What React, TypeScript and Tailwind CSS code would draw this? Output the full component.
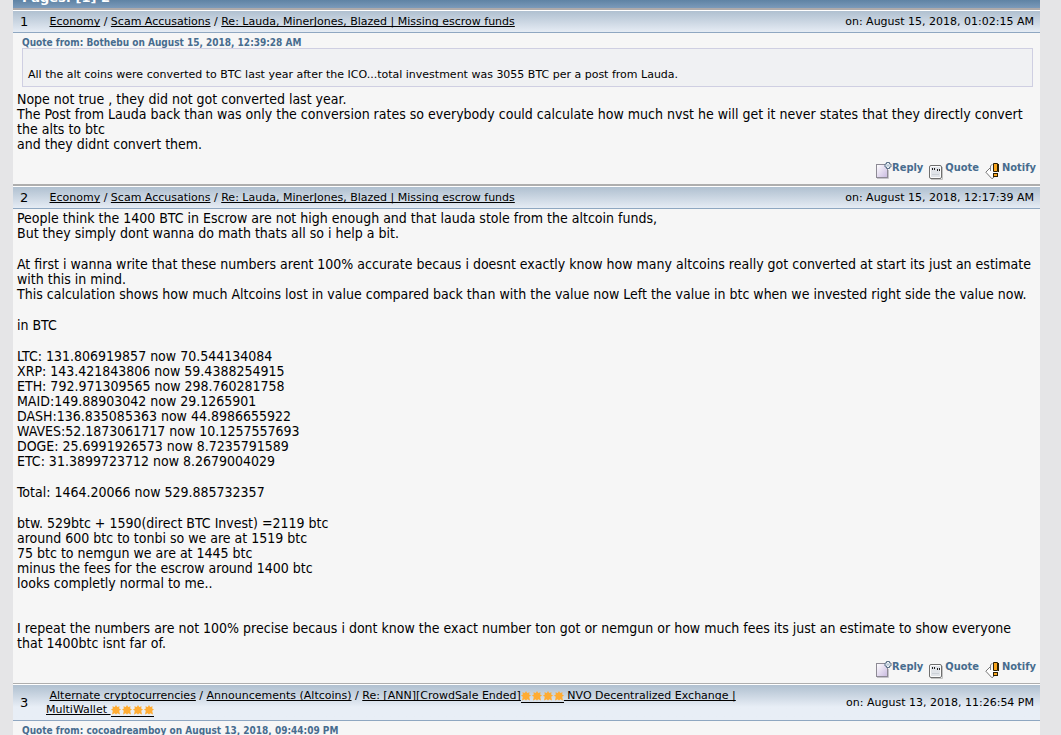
import { Fragment, ReactNode } from "react";

type Crumb = { label: ReactNode; href: string };

function Star() {
  return (
    <svg viewBox="0 0 10 10" className="h-[10px] w-[10px]" aria-hidden="true">
      <path
        d="M5 0 6.2 1.9 8.6 1.2 8.1 3.5 10 4.4 8.2 5.8 9 9.4 6.3 8.3 5 9.6 3.7 8.3 1 9.4 1.8 5.8 0 4.4 1.9 3.5 1.4 1.2 3.8 1.9Z"
        fill="#ffac33"
      />
    </svg>
  );
}

// the border carries the link underline on below the stars
function Stars() {
  return (
    <span className="inline-flex h-3 gap-px border-b border-black align-[-2px]">
      <Star />
      <Star />
      <Star />
      <Star />
    </span>
  );
}

function ReplyIcon() {
  return (
    <svg viewBox="0 0 16 18" className="h-[18px] w-4" aria-hidden="true">
      <defs>
        <linearGradient id="sheet" x1="0" y1="0" x2="1" y2="1">
          <stop offset="0" stopColor="#ffffff" />
          <stop offset="1" stopColor="#c9b9e0" />
        </linearGradient>
      </defs>
      <rect x="0.5" y="3.5" width="11" height="13" fill="url(#sheet)" stroke="#8d8a94" />
      <path d="M1 17.5h11.5V9" fill="none" stroke="#c5c3ca" />
      <path
        d="M10.5 1.5h3v1.5h1.5v3h-1.5v1.5h-3V6H9V3h1.5Z"
        fill="#eef3f8"
        stroke="#5b7188"
        strokeLinejoin="round"
      />
      <path d="M12 3v3M10.5 4.5h3" stroke="#b4c6d6" />
    </svg>
  );
}

function QuoteIcon() {
  return (
    <svg viewBox="0 0 14 15" className="h-[15px] w-[14px]" aria-hidden="true">
      <path d="M2 14.5h11.5V2" fill="none" stroke="#c4c4c4" />
      <rect x="0.5" y="0.5" width="12" height="13" rx="1.5" fill="#fcfcfc" stroke="#6f6f6f" />
      <rect x="2" y="2" width="9" height="10" fill="#e0e3e8" />
      <path d="M3.5 3v2M5.5 3v2M8.5 4v2M10.5 4v2" stroke="#222" />
      <path d="M3 9.5h7" stroke="#cbd0d6" />
    </svg>
  );
}

function NotifyIcon() {
  return (
    <svg viewBox="0 0 15 17" className="h-[17px] w-[15px]" aria-hidden="true">
      <path d="M5.5 4.5 0.8 9.2 7 15.8 13 10.5" fill="#fff" stroke="#777" />
      <path d="M7.5 1 5.5 3v5" fill="none" stroke="#888" />
      <path d="M8.5 0.5h4v8h-4Z" fill="#f9a51c" stroke="#2b2005" />
      <path d="M13.5 1v8" stroke="#2b2005" />
      <rect x="8.5" y="10.5" width="4" height="3" fill="#f9a51c" stroke="#2b2005" />
    </svg>
  );
}

function PostHeader({ num, crumbs, date }: { num: number; crumbs: Crumb[]; date: string }) {
  return (
    <header className="flex items-center border-b border-[#8fa7c1] bg-linear-to-b from-[#b0c0d0] to-[#e8eef6] to-[22px] pt-1 pr-[6px] pb-[3px] pl-[7px]">
      <span className="w-[26px] shrink-0 text-[13px] leading-[14px]">{num}</span>
      <div className="max-w-[700px] flex-1 text-[11px] leading-[14px]">
        &nbsp;
        {crumbs.map((c, i) => (
          <Fragment key={c.href}>
            {i > 0 && " / "}
            <a href={c.href} className="underline underline-offset-1 [text-decoration-skip-ink:none]">
              {c.label}
            </a>
          </Fragment>
        ))}
      </div>
      <span className="ml-auto text-[11px] leading-[14px] whitespace-nowrap">on: {date}</span>
    </header>
  );
}

function PostActions() {
  return (
    <div className="flex justify-end gap-[6px] pr-1 font-['DejaVu_Sans_Condensed','DejaVu_Sans',sans-serif] text-[11px] leading-[14px] font-bold text-[#476c8e]">
      <a href="#reply" className="flex items-start">
        <ReplyIcon />
        <span>Reply</span>
      </a>
      <a href="#quote" className="flex items-start gap-[2px]">
        <span className="pt-1">
          <QuoteIcon />
        </span>
        <span>Quote</span>
      </a>
      <a href="#notify" className="flex items-start gap-[2px]">
        <span className="pt-[2px]">
          <NotifyIcon />
        </span>
        <span>Notify</span>
      </a>
    </div>
  );
}

function QuoteTitle({ children }: { children: ReactNode }) {
  return (
    <div className="px-[5px] font-['DejaVu_Sans_Condensed','DejaVu_Sans',sans-serif] text-[10px] leading-[11px] font-bold text-[#476c8e]">
      {children}
    </div>
  );
}

function Lines({ lines }: { lines: string[] }) {
  return (
    <p>
      {lines.map((line) => (
        <span key={line} className="block">
          {line}
        </span>
      ))}
    </p>
  );
}

const threadCrumbs: Crumb[] = [
  { label: "Economy", href: "#economy" },
  { label: "Scam Accusations", href: "#scam-accusations" },
  { label: "Re: Lauda, MinerJones, Blazed | Missing escrow funds", href: "#missing-escrow" },
];

const nvoCrumbs: Crumb[] = [
  { label: "Alternate cryptocurrencies", href: "#altcoins" },
  { label: "Announcements (Altcoins)", href: "#announcements" },
  {
    label: (
      <>
        Re: [ANN][CrowdSale Ended]
        <Stars /> NVO Decentralized Exchange | MultiWallet <Stars />
      </>
    ),
    href: "#nvo",
  },
];

const values = [
  "LTC: 131.806919857 now 70.544134084",
  "XRP: 143.421843806 now 59.4388254915",
  "ETH: 792.971309565 now 298.760281758",
  "MAID:149.88903042 now 29.1265901",
  "DASH:136.835085363 now 44.8986655922",
  "WAVES:52.1873061717 now 10.1257557693",
  "DOGE: 25.6991926573 now 8.7235791589",
  "ETC: 31.3899723712 now 8.2679004029",
];

export default function App() {
  return (
    <div className="h-screen overflow-hidden bg-[#e5e5e7] pr-[21px] pl-[13px] font-['DejaVu_Sans',sans-serif] text-black">
      <main className="min-h-full bg-[#f6f6f6]">
        <nav className="flex h-2 items-end overflow-hidden bg-linear-to-b from-[#5f83a4] to-[#7b9aba] px-[9px] pb-[3px] text-[13px] leading-[15px] font-bold text-white">
          Pages: [1] 2
        </nav>

        <article className="border-t-2 border-[#aeaaaa]">
          <div className="border-t border-white">
            <PostHeader num={1} crumbs={threadCrumbs} date="August 15, 2018, 01:02:15 AM" />
            <div className="px-1 pt-1">
              <QuoteTitle>Quote from: Bothebu on August 15, 2018, 12:39:28 AM</QuoteTitle>
              <blockquote className="mr-[3px] ml-[5px] border border-[#cfcfe2] bg-[#f0f1f3] px-[5px] pt-[19px] pb-1 text-[11px] leading-[14px]">
                All the alt coins were converted to BTC last year after the ICO...total investment was 3055 BTC per a
                post from Lauda.
              </blockquote>
              <div className="pt-[5px] pb-[9px] font-['DejaVu_Sans_Condensed','DejaVu_Sans',sans-serif] text-[14px] leading-[15px]">
                <Lines
                  lines={[
                    "Nope not true , they did not got converted last year.",
                    "The Post from Lauda back than was only the conversion rates so everybody could calculate how much nvst he will get it never states that they directly convert the alts to btc",
                    "and they didnt convert them.",
                  ]}
                />
              </div>
            </div>
            <PostActions />
          </div>
        </article>

        <article className="mt-1 border-t-2 border-[#aeaeae]">
          <div className="border-t border-white">
            <PostHeader num={2} crumbs={threadCrumbs} date="August 15, 2018, 12:17:39 AM" />
            <div className="flex flex-col gap-4 px-1 pt-[2px] pb-[9px] font-['DejaVu_Sans_Condensed','DejaVu_Sans',sans-serif] text-[14px] leading-[15px]">
              <Lines
                lines={[
                  "People think the 1400 BTC in Escrow are not high enough and that lauda stole from the altcoin funds,",
                  "But they simply dont wanna do math thats all so i help a bit.",
                ]}
              />
              <Lines
                lines={[
                  "At first i wanna write that these numbers arent 100% accurate becaus i doesnt exactly know how many altcoins really got converted at start its just an estimate with this in mind.",
                  "This calculation shows how much Altcoins lost in value compared back than with the value now Left the value in btc when we invested right side the value now.",
                ]}
              />
              <p>in BTC</p>
              <Lines lines={values} />
              <p>Total: 1464.20066 now 529.885732357</p>
              <Lines
                lines={[
                  "btw. 529btc + 1590(direct BTC Invest) =2119 btc",
                  "around 600 btc to tonbi so we are at 1519 btc",
                  "75 btc to nemgun we are at 1445 btc",
                  "minus the fees for the escrow around 1400 btc",
                  "looks completly normal to me..",
                ]}
              />
              <p className="pt-[14px]">
                I repeat the numbers are not 100% precise becaus i dont know the exact number ton got or nemgun or how
                much fees its just an estimate to show everyone that 1400btc isnt far of.
              </p>
            </div>
            <PostActions />
          </div>
        </article>

        <article className="mt-1 border-t border-[#aeaeae]">
          <div className="border-t border-white">
            <PostHeader num={3} crumbs={nvoCrumbs} date="August 13, 2018, 11:26:54 PM" />
            <div className="px-1 pt-1">
              <QuoteTitle>Quote from: cocoadreamboy on August 13, 2018, 09:44:09 PM</QuoteTitle>
            </div>
          </div>
        </article>
      </main>
    </div>
  );
}
